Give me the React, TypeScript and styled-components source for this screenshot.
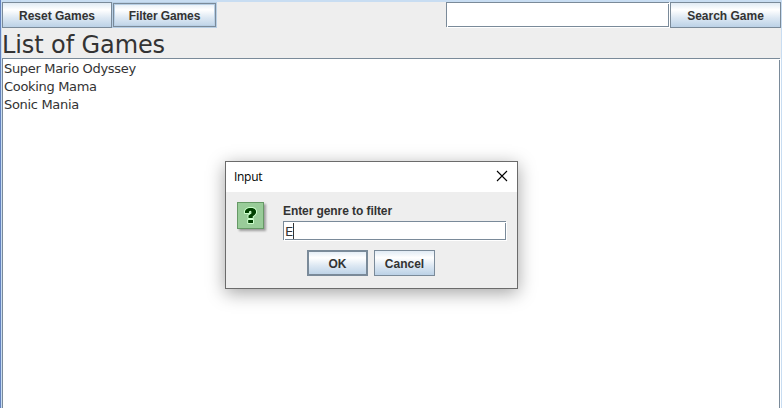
import React from 'react';
import styled, { createGlobalStyle, css } from 'styled-components';

const GlobalStyle = createGlobalStyle`
  * { box-sizing: border-box; }
  html, body, #root { height: 100%; }
  body { margin: 0; overflow: hidden; background: #eee; }
  button, input { margin: 0; border-radius: 0; outline: none; }
`;

/* Etched edge: a dark line with white notches at two corners and a white line outside. */
const flushBorder = css`
  border: 1px solid transparent;
  background:
    linear-gradient(#fff, #fff) left 1px bottom 0 / 1px 1px no-repeat border-box,
    linear-gradient(#fff, #fff) right 0 top 1px / 1px 1px no-repeat border-box,
    linear-gradient(#fff, #fff) padding-box,
    linear-gradient(#7a8a99, #7a8a99) border-box;
  box-shadow: 1px 1px #fff;
`;

const Frame = styled.main`
  height: 100%;
  display: flex;
  flex-direction: column;
  border-left: 1px solid #6382bf;
  border-right: 1px solid #c8ddf2;
  box-shadow: inset 1px 0 #c8ddf2, inset 0 2px #c8ddf2;
  padding: 2px 0 0 1px;
  color: #333;
  font-family: 'DejaVu Sans', sans-serif;
`;

const Toolbar = styled.div`
  display: flex;
  height: 26px;
  flex: none;
`;

const Spacer = styled.div`
  flex: 1;
`;

const MetalButton = styled.button<{ $width: number; $state?: 'hover' | 'default' }>`
  width: ${p => p.$width}px;
  height: 26px;
  flex: none;
  padding: 2px 0 0;
  border: 1px solid #7a8a99;
  background: linear-gradient(#dde8f3, #fff 30%, #dde8f3 60%, #b8cfe5) border-box;
  color: #333;
  font: bold 12px/16px 'Liberation Sans', sans-serif;
  white-space: nowrap;
  ${p => p.$state === 'hover' && css`
    border-color: #b8cfe5;
    box-shadow: inset 0 0 0 1px #7a8a99, inset 0 0 0 2px #b8cfe5;
    letter-spacing: -0.1px;
  `}
  ${p => p.$state === 'default' && css`
    border-width: 2px;
  `}
`;

const SearchField = styled.input`
  ${flushBorder}
  width: 223px;
  height: 25px;
  flex: none;
  margin-right: 1px;
  padding: 0 1px;
  color: #333;
  font: 12px 'DejaVu Sans', sans-serif;
`;

const Heading = styled.h1`
  margin: 0;
  height: 30px;
  flex: none;
  padding-top: 2px;
  font-size: 24px;
  font-weight: 400;
  line-height: 30px;
  letter-spacing: -0.1px;
  white-space: nowrap;
`;

const GameList = styled.ul`
  ${flushBorder}
  flex: 1;
  margin: 0 1px -2px 0;
  padding: 1px;
  list-style: none;
`;

const GameItem = styled.li`
  height: 18px;
  font-size: 13px;
  line-height: 18px;
  letter-spacing: -0.32px;
  white-space: nowrap;
`;

const Dialog = styled.section`
  position: absolute;
  left: 225px;
  top: 161px;
  width: 293px;
  height: 128px;
  border: 1px solid #6b6b6b;
  background: #eee;
  box-shadow: 0 4px 17px rgba(0, 0, 0, 0.36);
  color: #333;
`;

const TitleBar = styled.header`
  height: 30px;
  display: flex;
  align-items: center;
  justify-content: space-between;
  padding: 0 9px 0 8px;
  background: #fff;
  color: #000;
  font: 12px/16px 'Open Sans', sans-serif;
  letter-spacing: -0.3px;
`;

const CloseIcon = styled.svg`
  width: 12px;
  height: 12px;
  margin-bottom: 2px;
`;

const DialogBody = styled.div`
  display: flex;
  padding: 10px 11px 0;
`;

const QuestionIcon = styled.svg`
  width: 32px;
  height: 32px;
  flex: none;
  margin-right: 14px;
`;

const Prompt = styled.label`
  display: flex;
  flex-direction: column;
  font: bold 12px/16px 'Liberation Sans', sans-serif;
`;

const PromptText = styled.span`
  height: 19px;
  padding-top: 1px;
  letter-spacing: -0.08px;
`;

const Entry = styled.span`
  ${flushBorder}
  display: flex;
  width: 223px;
  height: 19px;
  padding: 1px 0 0 1px;
  font: 13px/17px 'DejaVu Sans', sans-serif;
`;

const Caret = styled.i`
  width: 1px;
  height: 16px;
  background: #333;
`;

const Actions = styled.div`
  display: flex;
  gap: 6px;
  padding: 10px 0 0 81px;
`;

const games = ['Super Mario Odyssey', 'Cooking Mama', 'Sonic Mania'];

const questionMark =
  'M8 11 V9 L9 7.5 L11 6.3 L13 6 H15.5 L17.8 7 L19 8.8 V11 L17.8 12.8 L15.7 14.4 V16 H11.5 V13.6 L14.4 11.4 V9.4 L13.4 8.8 L12.2 9.3 L11.8 11 Z M11.2 18 H16 V21 H11.2 Z';

export default function App() {
  return (
    <>
      <GlobalStyle />
      <Frame>
        <Toolbar>
          <MetalButton $width={110}>Reset Games</MetalButton>
          <MetalButton $width={105} $state="hover">Filter Games</MetalButton>
          <Spacer />
          <SearchField aria-label="Search" />
          <MetalButton $width={111}>Search Game</MetalButton>
        </Toolbar>
        <Heading>List of Games</Heading>
        <GameList>
          {games.map(game => <GameItem key={game}>{game}</GameItem>)}
        </GameList>
      </Frame>
      <Dialog role="dialog" aria-label="Input">
        <TitleBar>
          <span>Input</span>
          <CloseIcon viewBox="0 0 12 12">
            <path d="M1 1 L11 11 M11 1 L1 11" stroke="#000" strokeWidth="1.1" />
          </CloseIcon>
        </TitleBar>
        <DialogBody>
          <QuestionIcon viewBox="0 0 32 32">
            <defs>
              <filter id="iconShadow" x="-20%" y="-20%" width="150%" height="150%">
                <feDropShadow dx="2" dy="2" stdDeviation="1.2" floodOpacity="0.34" />
              </filter>
            </defs>
            <rect x="0.5" y="0.5" width="26" height="26" fill="#99cc99" stroke="#669966" filter="url(#iconShadow)" />
            <path d={questionMark} fill="#ccffcc" stroke="#ccffcc" strokeWidth="2" strokeLinejoin="round" />
            <path d={questionMark} fill="#004000" />
          </QuestionIcon>
          <Prompt>
            <PromptText>Enter genre to filter</PromptText>
            <Entry>E<Caret /></Entry>
          </Prompt>
        </DialogBody>
        <Actions>
          <MetalButton $width={61} $state="default">OK</MetalButton>
          <MetalButton $width={61}>Cancel</MetalButton>
        </Actions>
      </Dialog>
    </>
  );
}
